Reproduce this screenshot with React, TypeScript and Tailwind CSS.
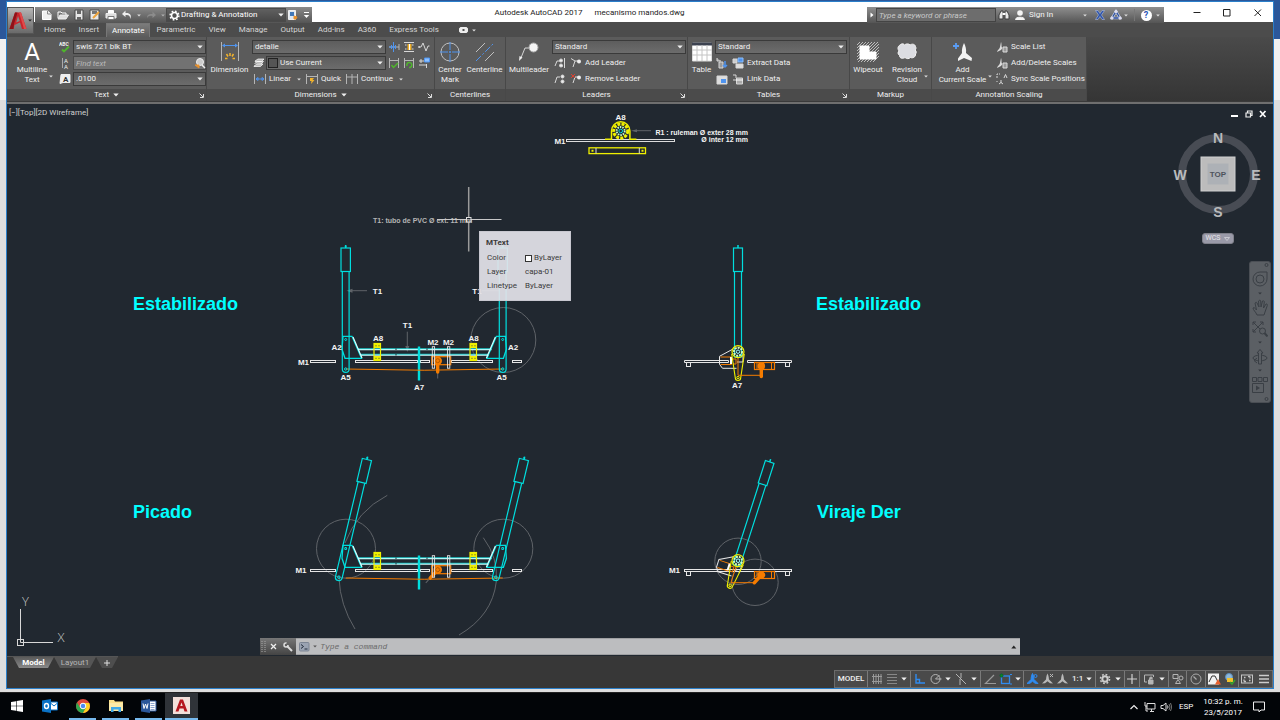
import React from "react";

type Kids = { children?: React.ReactNode };

function Ic({ w = 12, h = 12, className = "", children }: Kids & { w?: number; h?: number; className?: string }) {
  return (
    <svg width={w} height={h} viewBox={`0 0 ${w} ${h}`} fill="none" stroke="#d8d8d8" strokeWidth="1" className={`shrink-0 ${className}`} aria-hidden="true">
      {children}
    </svg>
  );
}

function Down({ className = "", tone = "#f0f0f0" }: { className?: string; tone?: string }) {
  return (
    <svg width="6" height="4" viewBox="0 0 6 4" fill={tone} className={`shrink-0 ${className}`} aria-hidden="true">
      <path d="M0.3 0.5h5.4L3 3.6z" />
    </svg>
  );
}

function SmallDown({ className = "", tone = "#e0e0e0" }: { className?: string; tone?: string }) {
  return (
    <svg width="4" height="3" viewBox="0 0 4 3" fill={tone} className={`shrink-0 ${className}`} aria-hidden="true">
      <path d="M0.2 0.4h3.6L2 2.6z" />
    </svg>
  );
}

function Combo({ label, value, className = "", pad = "pl-[2px]" }: { label: string; value: string; className?: string; pad?: string }) {
  return (
    <div className={`relative flex h-[14px] items-center border border-[#3a3a3a] bg-linear-to-b from-[#5d5d5d] to-[#6c6c6c] ${className}`}>
      <select aria-label={label} className={`h-full w-full appearance-none bg-transparent text-[8px] leading-[12px] text-[#f0f0f0] outline-none ${pad}`}>
        <option>{value}</option>
      </select>
      <Down className="pointer-events-none absolute right-[2px]" />
    </div>
  );
}

function Panel({ title, className = "", more = false, corner = false, children }: Kids & { title: string; className?: string; more?: boolean; corner?: boolean }) {
  return (
    <section aria-label={title} className={`flex shrink-0 flex-col border-r border-[#484848] ${className}`}>
      <div className="flex h-[52px] bg-[#5b5b5b] pt-[2px]">{children}</div>
      <div className="relative flex h-[12px] items-center justify-center gap-[4px] bg-[#4b4b4b] text-[8px] leading-[12px] text-[#efefef]">
        <span>{title}</span>
        {more && <Down />}
        {corner && (
          <Ic w={5} h={5} className="absolute right-[2px] top-[4px]">
            <path d="M0.5 0.5L4 4M4.5 1v3.5H1" stroke="#ddd" />
          </Ic>
        )}
      </div>
    </section>
  );
}

function Big({ icon, lines, className = "", arrow = "" }: { icon: React.ReactNode; lines: string[]; className?: string; arrow?: string }) {
  return (
    <button type="button" className={`relative flex shrink-0 flex-col items-center text-[8px] leading-[10px] whitespace-nowrap text-[#f0f0f0] ${className}`}>
      <span className="flex h-[26px] items-center">{icon}</span>
      {lines.map((l) => (
        <span key={l}>{l}</span>
      ))}
      {arrow && <SmallDown className={`absolute bottom-[11px] ${arrow}`} />}
    </button>
  );
}

function Small({ icon, label, arrow = false }: { icon: React.ReactNode; label?: string; arrow?: boolean }) {
  return (
    <button type="button" aria-label={label ?? "Tool"} className="flex h-4 items-center gap-[3px] text-[8px] leading-[12px] whitespace-nowrap text-[#f0f0f0]">
      {icon}
      {label && <span>{label}</span>}
      {arrow && <SmallDown className="ml-[3px]" />}
    </button>
  );
}

function IconBtn({ label, children, className = "" }: Kids & { label: string; className?: string }) {
  return (
    <button type="button" aria-label={label} className={`flex shrink-0 items-center justify-center ${className}`}>
      {children}
    </button>
  );
}

/* ---------- title bar ---------- */

function QuickAccess() {
  return (
    <div className="flex h-4 items-center self-end bg-linear-to-b from-[#8b8b8b] to-[#555] pl-[4px]">
      <IconBtn label="New" className="w-4">
        <Ic><path d="M1.500 2h5l3.500 3v5.500h-8.500z" fill="#eee" stroke="#fff" /><path d="M6.500 2v3h3.500" stroke="#888" /></Ic>
      </IconBtn>
      <IconBtn label="Open" className="w-4">
        <Ic><path d="M1 9V3h3l1 1h4v2" stroke="#fff" /><path d="M3 6h8.500L9 10H1z" fill="#ddd" stroke="#eee" /></Ic>
      </IconBtn>
      <IconBtn label="Save" className="w-4">
        <Ic><path d="M2 1h8v10H2z" fill="#e8e8e8" stroke="#4a4a4a" /><path d="M4 1h4v4H4zM4 8h4v3H4z" fill="#666" stroke="none" /></Ic>
      </IconBtn>
      <IconBtn label="Save As" className="w-4">
        <Ic><path d="M1 1h9v10H1z" fill="#e8e8e8" stroke="#4a4a4a" /><path d="M3 2h5v3H3z" fill="#777" stroke="none" /><path d="M4 9l6-6" stroke="#eda33b" strokeWidth="2" /></Ic>
      </IconBtn>
      <IconBtn label="Plot" className="w-4">
        <Ic><path d="M3.500 4V1.500h5V4" fill="#fff" stroke="#fff" /><path d="M1 4.500h10V9H1z" fill="#ddd" stroke="#eee" /><path d="M3 7.500h6v3H3z" fill="#fff" stroke="#777" /></Ic>
      </IconBtn>
      <IconBtn label="Undo" className="w-4">
        <Ic><path d="M4.500 1.500L1 5l3.500 3V6c3-.5 5 .5 4.500 4 2.500-4-.5-6.500-4.500-6z" fill="#eee" stroke="none" /></Ic>
      </IconBtn>
      <IconBtn label="Undo list" className="w-[8px]"><SmallDown /></IconBtn>
      <IconBtn label="Redo" className="w-4">
        <Ic><path d="M7.500 2.500L11 6 7.500 9V7C4.500 6.500 3 7 2.500 9 1.500 6 4 4.800 7.500 5z" fill="#8c8c8c" stroke="none" /></Ic>
      </IconBtn>
      <IconBtn label="Redo list" className="w-[7px]"><SmallDown tone="#b0b0b0" /></IconBtn>
      <div className="relative flex h-[14px] w-[120px] items-center border border-[#4a4a4a] bg-linear-to-b from-[#606060] to-[#484848]">
        <Ic w={11} h={11} className="absolute left-[2px]">
          <circle cx="5.500" cy="5.500" r="3" stroke="#fff" strokeWidth="1.600" />
          <circle cx="5.500" cy="5.500" r="4.400" stroke="#fff" strokeWidth="1.500" strokeDasharray="1.700 1.750" />
        </Ic>
        <select aria-label="Workspace" className="w-full appearance-none bg-transparent pl-[14px] text-[8px] leading-[12px] text-white outline-none">
          <option>Drafting &amp; Annotation</option>
        </select>
        <Down className="pointer-events-none absolute right-[1px]" />
      </div>
      <IconBtn label="Open from cloud" className="w-[14px]">
        <Ic><path d="M1.500 1.500h7v9h-7z" fill="#dfe8f2" stroke="#eee" /><path d="M3 3h4v4H3z" fill="#3f77b8" stroke="none" /><path d="M7 7l3 1-1 2-2 0z" fill="#e8912d" stroke="#e8912d" /></Ic>
      </IconBtn>
      <IconBtn label="Customize" className="w-[12px]">
        <Ic w={7} h={8}><path d="M1 1.500h5" stroke="#fff" /><path d="M0.800 4h5.400L3.500 7z" fill="#fff" stroke="none" /></Ic>
      </IconBtn>
    </div>
  );
}

function InfoCenter() {
  return (
    <div className="flex h-4 items-center self-end bg-linear-to-b from-[#8f8f8f] to-[#555]">
      <IconBtn label="Collapse search" className="h-4 w-[9px]">
        <Ic w={4} h={6}><path d="M0.500 0.500v5L3.500 3z" fill="#fff" stroke="none" /></Ic>
      </IconBtn>
      <input aria-label="Search" placeholder="Type a keyword or phrase" className="h-[14px] w-[120px] border border-[#444] bg-[#6d6d6d] pl-[2px] text-[8px] italic leading-[12px] text-white outline-none placeholder:text-[#c9c9c9]" />
      <IconBtn label="Find" className="w-4">
        <Ic><path d="M1 10V6l2-4h2v8zM11 10V6L9 2H7v8z" fill="#e8e8e8" stroke="#3d3d3d" /><path d="M4.500 5h3" stroke="#fff" strokeWidth="2" /></Ic>
      </IconBtn>
      <button type="button" className="flex items-center gap-[3px] pl-[2px] text-[8px] leading-[12px] text-[#f4f4f4]">
        <Ic><circle cx="6" cy="4" r="2.800" fill="#f4f4f4" stroke="none" /><path d="M1.500 10.500c0-3 9-3 9 0z" fill="#f4f4f4" stroke="#f4f4f4" /></Ic>
        <span className="w-[26px] text-left">Sign In</span>
      </button>
      <SmallDown className="ml-[28px]" />
      <IconBtn label="Exchange" className="ml-[5px] w-4">
        <Ic><path d="M1.500 1.500h2.500l2 3 2-3h2.500L7.500 6l3 4.500H8l-2-3-2 3H1.500l3-4.500z" fill="#2f55ac" stroke="#c3cfe8" strokeWidth="0.500" /></Ic>
      </IconBtn>
      <IconBtn label="Autodesk 360" className="w-4">
        <Ic><path d="M2 9L6 2.500 10 9z" stroke="#c3cfe8" strokeWidth="2.500" /><path d="M2 9L6 2.500 10 9z" stroke="#2f4f9e" strokeWidth="1.300" /><circle cx="6" cy="2.500" r="1.200" fill="#dde" stroke="#dde" /><circle cx="2" cy="9" r="1.200" fill="#dde" stroke="#dde" /><circle cx="10" cy="9" r="1.200" fill="#dde" stroke="#dde" /></Ic>
      </IconBtn>
      <SmallDown />
      <span className="ml-[6px] h-[12px] w-px bg-[#777]" />
      <IconBtn label="Help" className="ml-[3px] w-4">
        <span className="flex h-[11px] w-[11px] items-center justify-center rounded-full bg-white text-[9px] font-bold leading-none text-[#2a55b5]">?</span>
      </IconBtn>
      <SmallDown className="mr-[4px] ml-[2px]" />
    </div>
  );
}

const TABS = ["Home", "Insert", "Annotate", "Parametric", "View", "Manage", "Output", "Add-ins", "A360", "Express Tools"];

function Header() {
  return (
    <header className="flex bg-[linear-gradient(#fff_20px,#4c4c4c_20px)]">
      <button type="button" aria-label="Application menu" className="mt-[5px] flex h-[27px] w-[27px] shrink-0 items-center border border-[#555] bg-linear-to-b from-[#b5b5b5] to-[#6a6a6a]">
        <svg width="18" height="20" viewBox="0 0 18 20" className="ml-px" aria-hidden="true">
          <path d="M0.500 18L6 1.500h6L17.500 18h-4.500l-2-6.500L5.500 14 4.500 18z" fill="#c8242b" />
          <path d="M6 1.500h2.500L5 13l-.500 5h-4z" fill="#8e1219" />
          <path d="M9 5l1.800 5-3.600 1.500z" fill="#8a8a8a" />
          <path d="M12 1.500L17.500 18H15L10 1.500z" fill="#e04b4b" />
        </svg>
        <SmallDown className="ml-px" tone="#222" />
      </button>
      <div className="flex min-w-0 flex-1 flex-col">
        <div className="flex h-[21px] items-stretch pl-px">
          <QuickAccess />
          <h1 className="flex-1 self-center text-center text-[8px] leading-[12px] whitespace-pre text-[#222]">{"Autodesk AutoCAD 2017      mecanismo mandos.dwg"}</h1>
          <InfoCenter />
          <div className="flex w-[109px] items-center justify-around pl-[18px]">
            <IconBtn label="Minimize" className="h-[16px] w-[28px]"><Ic w={8} h={8}><path d="M0.500 3.500h7" stroke="#222" /></Ic></IconBtn>
            <IconBtn label="Maximize" className="h-[16px] w-[28px]"><Ic w={8} h={8}><path d="M0.500 0.500h6.500v6.500H0.500z" stroke="#222" /></Ic></IconBtn>
            <IconBtn label="Close" className="h-[16px] w-[28px]"><Ic w={8} h={8}><path d="M0.500 0.500l6.500 6.500M7 0.500L0.500 7" stroke="#222" /></Ic></IconBtn>
          </div>
        </div>
        <nav aria-label="Ribbon tabs" className="flex h-[14px] items-stretch pl-[4px] text-[8px] leading-[12px] text-[#d5d5d5]">
          {TABS.map((t) => (
            <button key={t} type="button" className={t === "Annotate" ? "border-x border-t border-[#777] bg-linear-to-b from-[#7c7c7c] to-[#5b5b5b] px-[5px] text-white" : "pr-[7px] pl-[6px]"}>
              {t}
            </button>
          ))}
          <button type="button" aria-label="Ribbon display" className="ml-[13px] flex items-center gap-[4px]">
            <Ic w={9} h={6}><rect x="0.500" y="0.500" width="8" height="5" rx="1.500" fill="#eee" stroke="#eee" /><path d="M3.500 2h2v2h-2z" fill="#555" stroke="none" /></Ic>
            <SmallDown />
          </button>
        </nav>
      </div>
    </header>
  );
}

/* ---------- ribbon ---------- */

const scaleIcon = (
  <Ic><path d="M5 1c1 2 0 5 1.500 6L5 9 1 11c0-2 3-3 3-5z" fill="#ddd" stroke="none" /><path d="M7 6h4v5H7z" fill="#999" stroke="#ddd" /></Ic>
);

function Ribbon() {
  return (
    <div className="flex bg-linear-to-b from-[#4a4a4a] to-[#353535]">
      <Panel title="Text" more corner className="w-[200px]">
        <Big className="w-[50px]" arrow="right-[4px]" lines={["Multiline", "Text"]} icon={<span className="text-[24px] leading-none text-white">A</span>} />
        <div className="flex w-[16px] flex-col items-center">
          <IconBtn label="Spell check" className="h-4"><Ic><text x="0" y="5" fontSize="5" fontWeight="bold" fill="#eee" stroke="none">ABC</text><path d="M3 8.500l2 2 5-5" stroke="#4fb52c" strokeWidth="1.800" /></Ic></IconBtn>
          <IconBtn label="Text align" className="h-4"><Ic><path d="M3.500 1v10" stroke="#aaa" /><text x="5" y="6" fontSize="6" fill="#eee" stroke="none">A</text><text x="5" y="11.500" fontSize="6" fill="#eee" stroke="none">A</text></Ic></IconBtn>
          <IconBtn label="Text height" className="h-4"><Ic><path d="M2 1.500h9v8H4l-3 1z" fill="#eee" stroke="#eee" /><text x="4" y="9" fontSize="8" fontWeight="bold" fill="#333" stroke="none">A</text></Ic></IconBtn>
        </div>
        <div className="flex flex-1 flex-col gap-[2px] pt-px">
          <Combo label="Text style" value="swis 721 blk BT" />
          <div className="relative flex h-[14px] items-center">
            <input aria-label="Find text" placeholder="Find text" className="h-full w-full border border-[#4a4a4a] bg-[#727272] pl-[2px] text-[8px] italic text-white outline-none placeholder:text-[#b9b9b9]" />
            <Ic className="absolute right-0"><circle cx="6" cy="5" r="3.500" fill="#ccc" stroke="#eee" /><path d="M8 8l3 3" stroke="#eee" strokeWidth="1.500" /><path d="M1 8h4v3z" fill="#e8912d" stroke="#e8912d" /></Ic>
          </div>
          <Combo label="Text height value" value=".0100" />
        </div>
      </Panel>

      <Panel title="Dimensions" more corner className="w-[228px]">
        <Big
          className="w-[45px]"
          lines={["Dimension"]}
          icon={
            <Ic w={20} h={20}>
              <path d="M1.500 0v19M18.500 0v19" stroke="#b5b5b5" /><path d="M3 3.500h14" stroke="#4f94ef" /><path d="M2 3.500l3-2v4zM18 3.500l-3-2v4z" fill="#4f94ef" stroke="none" />
              <path d="M10 11v3M6.500 12l1.500 2.500M13.500 12L12 14.500M5 16.500h2.500M12.500 16.500H15" stroke="#f2b32c" strokeWidth="1.500" />
            </Ic>
          }
        />
        <div className="flex flex-1 flex-col pr-[2px]">
          <div className="flex items-start">
            <div className="flex w-[134px] flex-col gap-[2px] pt-px">
              <Combo label="Dimension style" value="detalle" />
              <div className="flex items-center">
                <IconBtn label="Dimension layer" className="w-[14px]">
                  <Ic w={12} h={12}><path d="M1 9l3-2h6L7.500 9.500H1zM1.500 6.500l3-2h6L8 7M2 4l3-2h6L8.500 4.500H2z" fill="#bbb" stroke="#fff" strokeWidth="0.700" /></Ic>
                </IconBtn>
                <div className="relative flex-1">
                  <Combo label="Layer override" value="Use Current" pad="pl-[13px]" />
                  <span className="pointer-events-none absolute top-[2px] left-[2px] h-[10px] w-[10px] border border-[#222] bg-[#555]" />
                </div>
              </div>
            </div>
            <div className="grid flex-1 grid-cols-3 justify-items-center">
              <IconBtn label="Break" className="h-4"><Ic><path d="M1 6h10M11 3v6" stroke="#b5b5b5" /><path d="M5.500 1v10M1 6h6M3.500 4v4M7.500 4v4" stroke="#4f94ef" /></Ic></IconBtn>
              <IconBtn label="Adjust space" className="h-4"><Ic><path d="M1 1.500h10M1 10.500h10M2 4h1.500M9 4h1.500M2 8h1.500M9 8h1.500" /><path d="M4.500 3h4v6h-4z" fill="#f2b32c" stroke="none" /><path d="M6.500 3v6" stroke="#fff" /></Ic></IconBtn>
              <IconBtn label="Jog line" className="h-4"><Ic><path d="M1 6h2l2-4 3 8 2-5 1.500 0" /><path d="M1 5v2" stroke="#fff" /></Ic></IconBtn>
              <IconBtn label="Inspect" className="h-4"><Ic><path d="M1.500 1v10M10.500 1v10M2 3.500h8" stroke="#b5b5b5" /><path d="M3.500 8l2 2.500L10 6" stroke="#4fb52c" strokeWidth="1.500" /></Ic></IconBtn>
              <IconBtn label="Update" className="h-4"><Ic><path d="M1.500 1v10M10.500 1v10M2 3.500h8" stroke="#b5b5b5" /><path d="M4 9a2.500 2.500 0 1 1 2 1.500" stroke="#4fb52c" strokeWidth="1.500" /></Ic></IconBtn>
              <IconBtn label="Reassociate" className="h-4"><Ic><path d="M1 4h6M1 8h8M3 2v4M8.500 7v4" /><path d="M6.500 1h5v4h-5z" fill="#8cc0ff" stroke="#4f94ef" /></Ic></IconBtn>
            </div>
          </div>
          <div className="flex h-4 items-center gap-[5px] pl-[2px]">
            <Small label="Linear" arrow icon={<Ic><path d="M0.500 1v10M11.500 1v10" stroke="#b5b5b5" /><path d="M2 6h8M2 6l2-1.500v3zM10 6L8 4.500v3z" stroke="#4f94ef" /></Ic>} />
            <Small label="Quick" icon={<Ic><path d="M0.500 1v10M11.500 1v10M1 3.500h10" stroke="#b5b5b5" /><path d="M4 5h4L6.500 7h2L5 11l.500-3H4z" fill="#f2b32c" stroke="none" /></Ic>} />
            <Small label="Continue" arrow icon={<Ic><path d="M0.500 1v10M6 1v10M11.500 1v10M1 4h10" stroke="#b5b5b5" /></Ic>} />
          </div>
        </div>
      </Panel>

      <Panel title="Centerlines" className="w-[71px]">
        <Big
          className="w-[30px]"
          lines={["Center", "Mark"]}
          icon={<Ic w={20} h={20}><circle cx="10" cy="10" r="9" stroke="#c0c0c0" /><path d="M0 10h8M12 10h8M10 0v8M10 12v8M9 10h2M10 9v2" stroke="#4f94ef" /></Ic>}
        />
        <Big
          className="w-[39px]"
          lines={["Centerline"]}
          icon={<Ic w={20} h={20}><path d="M1 10L10 1M10 19l9-9" stroke="#c0c0c0" /><path d="M1 19L19 1" stroke="#4f94ef" strokeDasharray="7 2 2 2" /></Ic>}
        />
      </Panel>

      <Panel title="Leaders" corner className="w-[182px]">
        <Big
          className="w-[46px]"
          lines={["Multileader"]}
          icon={<Ic w={20} h={20}><path d="M1.500 17L6 6h5" stroke="#d5d5d5" /><path d="M0 19l.500-5 3 1.500z" fill="#eee" stroke="none" /><circle cx="14.500" cy="5.500" r="4.500" fill="#f4f4f4" stroke="#aaa" /></Ic>}
        />
        <div className="flex flex-1 flex-col gap-[2px] pt-px pr-px">
          <Combo label="Leader style" value="Standard" />
          <div className="flex h-[14px] items-center gap-[4px] pl-[2px]">
            <Small icon={<Ic><path d="M1 9l2-5h3M6 9h3M10.500 1v10" /><circle cx="7" cy="3.500" r="1.500" fill="#eee" /><circle cx="7" cy="8.500" r="1.500" fill="#eee" /></Ic>} />
            <Small label="Add Leader" icon={<Ic><path d="M3 10l2-6h3M1 1.500l4 2.500" /><circle cx="9" cy="4.500" r="2" fill="#eee" stroke="none" /></Ic>} />
          </div>
          <div className="flex h-[14px] items-center gap-[4px] pl-[2px]">
            <Small icon={<Ic><path d="M1 10l2-6h3" /><circle cx="8.500" cy="3.500" r="1.500" fill="#eee" /><circle cx="8.500" cy="8.500" r="1.500" fill="#eee" /></Ic>} />
            <Small label="Remove Leader" icon={<Ic><path d="M3 10l2-6h3" /><path d="M1 1l4 4M5 1L1 5" stroke="#e04030" /><circle cx="9" cy="4.500" r="2" fill="#eee" stroke="none" /></Ic>} />
          </div>
        </div>
      </Panel>

      <Panel title="Tables" corner className="w-[162px]">
        <Big
          className="w-[27px]"
          lines={["Table"]}
          icon={<Ic w={20} h={20}><path d="M0.500 1h19v18H0.500z" fill="#fff" stroke="#ddd" /><path d="M0 0.500h20v3H0z" fill="#3c4250" stroke="none" /><path d="M0 8h20M0 13h20M5 3v16M10 3v16M15 3v16" stroke="#c4c4c4" /></Ic>}
        />
        <div className="flex flex-1 flex-col gap-[2px] pt-px pr-[2px]">
          <Combo label="Table style" value="Standard" />
          <div className="flex h-[14px] items-center gap-[4px] pl-px">
            <Small icon={<Ic><path d="M1 1v3h4M3 5h4v6H3z" fill="#999" /><path d="M9 4v6M7 8l2 2 2-2" stroke="#4f94ef" strokeWidth="1.500" /></Ic>} />
            <Small label="Extract Data" icon={<Ic><path d="M1 2h4v4H1z" fill="#ccc" /><path d="M6 1h5v4H6z" fill="#4f94ef" stroke="#8cc0ff" /><path d="M4 7h7v4H4z" fill="#ddd" /></Ic>} />
          </div>
          <div className="flex h-[14px] items-center gap-[4px] pl-px">
            <Small icon={<Ic><path d="M1 3h10v8H1z" fill="#ddd" /><path d="M5 6h5v4H5z" fill="#4f94ef" stroke="none" /></Ic>} />
            <Small label="Link Data" icon={<Ic><path d="M1 2h3v3M1 7h3" /><path d="M4.500 5h6v6h-6z" fill="#aaa" /><path d="M4 7h7" stroke="#fff" /></Ic>} />
          </div>
        </div>
      </Panel>

      <Panel title="Markup" className="w-[82px]">
        <Big
          className="w-[36px]"
          lines={["Wipeout"]}
          icon={<Ic w={22} h={20}><path d="M0 6L6 0M0 12L12 0M0 18L18 0M4 20L22 2M10 20L22 8M16 20l6-6M0 3l3-3M0 9L9 0M0 15L15 0M1 20L21 0M7 20L22 5M13 20l9-9" stroke="#bdbdbd" /><path d="M3 4h9v6h7v7H3z" fill="#fff" stroke="#fff" /></Ic>}
        />
        <Big
          className="w-[42px]"
          arrow="right-0"
          lines={["Revision", "Cloud"]}
          icon={<Ic w={20} h={18}><path d="M3 2c2-2 4-1 4.500 0C9 .5 12 .5 13 2c2-1.500 5-1 5.500 1.500.8 1.500.5 2.500-.3 3.500 1.500 1.500 1.200 3 .3 4 .5 3-3 4.500-5 3.500-1.500 1.500-4 1.500-5.500 0-2 1.500-5.500 1-5.500-2C.5 11 .8 9 2 8 .5 6 .5 3.500 3 2z" fill="#dcdde2" stroke="#f5f5f5" /></Ic>}
        />
      </Panel>

      <Panel title="Annotation Scaling" className="w-[155px]">
        <Big
          className="w-[61px]"
          arrow="right-px"
          lines={["Add", "Current Scale"]}
          icon={<Ic w={20} h={20}><path d="M11 1c1.500 3 2.500 6 2 10l6 5-.5 3-7.500-3-6 3v-2.500l4-5.500C8.500 8 9.500 4 11 1z" fill="#f2f2f2" stroke="none" /><path d="M3 1v6M0 4h6" stroke="#5a9df5" strokeWidth="1.800" /></Ic>}
        />
        <div className="flex flex-1 flex-col pl-[3px]">
          <Small label="Scale List" icon={scaleIcon} />
          <Small label="Add/Delete Scales" icon={scaleIcon} />
          <Small label="Sync Scale Positions" icon={<Ic><path d="M1 5V1h3M1 8v1" strokeDasharray="2 1" /><path d="M8 5l1.500-3.500L11 5M5 7v3M3 11l2-1.500L7 11" /></Ic>} />
        </div>
      </Panel>
    </div>
  );
}

/* ---------- drawing ---------- */

const CY = "#00dede";
const OR = "#f57c00";
const YE = "#f0f000";
const GY = "#5f6368";

function Lever({ x }: { x: number }) {
  return (
    <g transform={`translate(${x} 0)`} stroke={CY} fill="none" strokeWidth="1.200">
      <path d="M0 245v3M-1 246.500h2" strokeWidth="1.500" />
      <rect x="-4.700" y="248" width="9.400" height="23.500" />
      <path d="M-3.400 271.500V369a3.400 3.400 0 0 0 6.800 0V271.500" />
      <circle cx="0" cy="369" r="1.200" strokeWidth="1" />
      <circle cx="0" cy="339.500" r="1" strokeWidth="1" />
    </g>
  );
}

function Bracket() {
  return (
    <g fill="none">
      <path d="M343 336.300h9l9.500 22H345l-3-9z" stroke={CY} strokeWidth="1.300" />
      <path d="M353 337l6 14 3 7" stroke="#d9ffff" strokeWidth="1.200" />
    </g>
  );
}

function Clamp({ x }: { x: number }) {
  return (
    <g>
      <rect x={x} y="343.500" width="6.500" height="17" fill="none" stroke={YE} strokeWidth="1.200" />
      <rect x={x} y="343.500" width="6.500" height="4.500" fill={YE} />
      <rect x={x} y="356" width="6.500" height="4.500" fill={YE} />
      <path d={`M${x + 1.5} 345.800h1m2 0h1M${x + 1.5} 358.300h1m2 0h1`} stroke="#444" strokeWidth="1" />
    </g>
  );
}

function FrontBase({ tilt }: { tilt: number }) {
  return (
    <g>
      <g fill="none" stroke="#e6e6e6" strokeWidth="1">
        <rect x="310.500" y="360.500" width="25" height="2" />
        <rect x="355.500" y="360.500" width="62" height="2" />
        <rect x="420.500" y="360.500" width="9" height="2" />
        <rect x="451.500" y="360.500" width="41" height="2" />
        <rect x="512.500" y="360.500" width="9" height="2" />
      </g>
      <g>
        <path d="M358 349.500H491.500M360 355H489" stroke="#cfffff" strokeWidth="1.400" />
        <path d="M358 348.700H491.500M360 354.200H489" stroke={CY} strokeWidth="0.700" />
        <path d="M396 348.500v1.500M427 348.500v1.500M396 354v1.500" stroke="#222930" strokeWidth="1" />
      </g>
      <Bracket />
      <g transform="translate(848.400 0) scale(-1 1)"><Bracket /></g>
      <Clamp x={374} />
      <Clamp x={470} />
      <path d="M419 346.500v34" stroke={CY} strokeWidth="2.400" />
      <path d="M345.700 369q78.500 2.500 157 0" fill="none" stroke={OR} strokeWidth="1" />
      <rect x="431.700" y="356.700" width="19" height="8" fill="none" stroke={OR} strokeWidth="1.200" />
      <g transform={`rotate(${tilt} 437.700 360.700)`}>
        <path d="M437.700 372v6.500" stroke={GY} strokeWidth="1" />
        <path d="M437.700 360v12" stroke={OR} strokeWidth="3.400" strokeLinecap="round" />
        <circle cx="437.700" cy="360.700" r="4.300" fill={OR} />
        <circle cx="437.700" cy="360.700" r="2" fill="none" stroke="#8a4500" strokeWidth="0.600" />
      </g>
      <rect x="432.300" y="346.700" width="2.300" height="21.500" fill="none" stroke="#e6e6e6" strokeWidth="0.900" />
      <rect x="447.500" y="346.700" width="2.300" height="21.500" fill="none" stroke="#e6e6e6" strokeWidth="0.900" />
    </g>
  );
}

function SideLever() {
  return (
    <g fill="none" stroke={CY} strokeWidth="1.200">
      <path d="M738 245v3" strokeWidth="1.500" />
      <rect x="733.500" y="248" width="9" height="23.500" />
      <path d="M734.500 271.500V357h7V271.500" />
    </g>
  );
}

function Housing() {
  return (
    <g fill="none">
      <path d="M736.500 368.300h-14l-3-4v-8l13-7M743 354v8h-6" stroke="#e6e6e6" />
      <path d="M720.500 357h11v7.500h-11M738 358v17M733 359h3v5h-3" stroke={OR} />
      <path d="M731 357v7" stroke="#fff" strokeWidth="2" />
      <path d="M731.700 354l3.600 23.800a2.700 2.700 0 0 0 5.400 0L744.300 354" stroke={YE} strokeWidth="1.100" />
      <circle cx="738" cy="351.700" r="6" stroke={YE} strokeWidth="1.200" />
      <circle cx="738" cy="351.700" r="4" stroke="#d8ffb8" strokeWidth="2" strokeDasharray="2 1" />
      <circle cx="738" cy="351.700" r="1.700" stroke="#9ff" strokeWidth="1" />
      <circle cx="738" cy="377.500" r="1.200" stroke={YE} />
    </g>
  );
}

function SideBase({ tilt, full }: { tilt: number; full: boolean }) {
  return (
    <g>
      <g fill="none" stroke="#e6e6e6">
        {full ? <rect x="684.500" y="360.500" width="107" height="2" /> : <path d="M684.500 360.500h44v2h-44zM747.500 360.500h44v2h-44z" />}
        <rect x="686.500" y="362.500" width="4" height="4" />
        <rect x="785.500" y="362.500" width="4" height="4" />
      </g>
      <rect x="754.500" y="362.500" width="20" height="7" fill="none" stroke={OR} strokeWidth="1.200" />
      <path d="M757 362.500v7M771.500 362.500v7" stroke={OR} />
      <g transform={`rotate(${tilt} 761.300 366)`}>
        <path d="M761.300 366v10.500" stroke={OR} strokeWidth="3.400" strokeLinecap="round" />
        <circle cx="761.300" cy="366" r="3.800" fill={OR} />
      </g>
    </g>
  );
}

function Label({ x, y, t, anchor = "middle" }: { x: number; y: number; t: string; anchor?: "start" | "middle" | "end" }) {
  return <text x={x} y={y} textAnchor={anchor}>{t}</text>;
}

function Drawing() {
  return (
    <svg viewBox="7 104 1266 552" preserveAspectRatio="xMinYMin meet" className="block h-full w-full font-['Liberation_Sans',sans-serif]" role="img" aria-label="mecanismo mandos">
      {/* bearing detail */}
      <rect x="566.500" y="139.500" width="108" height="2" fill="none" stroke="#dcdcdc" />
      <g fill="none" stroke={YE}>
        <path d="M605 139.300h6.500V131a9.200 9.200 0 0 1 18.400 0v8.300h6.500" strokeWidth="1.500" />
        <circle cx="620.700" cy="131" r="7" strokeWidth="3" strokeDasharray="3 1.200" />
        <circle cx="620.700" cy="131" r="4" stroke="#c8ffc8" strokeWidth="1.800" strokeDasharray="1.500 1" />
        <circle cx="620.700" cy="131" r="1.800" stroke={CY} />
        <rect x="589" y="147.800" width="56.500" height="5.800" strokeWidth="1.300" />
        <path d="M596 148v5.500M639.300 148v5.500" stroke="#ddd" />
        <path d="M591.500 150.700h2M641.500 150.700h2" strokeWidth="2" />
      </g>
      <g stroke={GY} fill={GY}>
        <path d="M634 130.700h17" /><path d="M631 130.700l6-1.500v3z" stroke="none" />
        <path d="M350 290.700h17" /><path d="M346.500 290.700l6-2v4z" stroke="none" />
        <path d="M407.300 331.700v17" /><path d="M407.300 352l-2-6h4z" stroke="none" />
        <path d="M482 290.700h17" />
      </g>

      {/* front view, stable */}
      <circle cx="503.300" cy="340" r="32.500" fill="none" stroke={GY} />
      <FrontBase tilt={0} />
      <Lever x={345.7} />
      <Lever x={502.7} />

      {/* side view, stable */}
      <SideBase tilt={0} full={false} />
      <SideLever />
      <Housing />
      <path d="M738 375.300h23" stroke={OR} />

      {/* front view, dive */}
      <g transform="translate(0 209)">
        <g fill="none" stroke={GY}>
          <circle cx="346" cy="339.700" r="29.500" />
          <circle cx="503.300" cy="339.700" r="29.500" />
          <path d="M387.300 286.300Q357 302 345 334M339 369q1 27 16 51M483.300 328.700q15 20 13 44-4 34-37.300 53.300" />
        </g>
        <FrontBase tilt={42} />
        <g transform="rotate(13.400 345.700 339.500)"><Lever x={345.7} /></g>
        <g transform="rotate(13.400 502.700 339.500)"><Lever x={502.7} /></g>
      </g>

      {/* side view, right turn */}
      <g transform="translate(0 209)">
        <circle cx="738" cy="352.300" r="23.200" fill="none" stroke={GY} />
        <circle cx="755" cy="373.300" r="23.200" fill="none" stroke={GY} />
        <SideBase tilt={42} full />
        <g transform="rotate(17.800 738 351.700)">
          <SideLever />
          <Housing />
        </g>
        <path d="M731 373.700h23" stroke={OR} />
      </g>

      {/* annotations */}
      <g fill="#f4f4f4" fontSize="8" fontWeight="bold">
        <Label x={620.5} y={120} t="A8" /><Label x={560} y={144} t="M1" />
        <g fontSize="7">
          <Label x={748} y={135} t="R1 : ruleman Ø exter 28 mm" anchor="end" />
          <Label x={748} y={142} t="Ø inter 12 mm" anchor="end" />
          <text x="373" y="223" fill="#b5b5b5">T1: tubo de PVC Ø ext. 11 mm</text>
        </g>
        <Label x={377.5} y={294} t="T1" /><Label x={477} y={294} t="T1" /><Label x={407.5} y={328} t="T1" />
        <Label x={378} y={341} t="A8" /><Label x={473.5} y={341} t="A8" />
        <Label x={433} y={345} t="M2" /><Label x={448.5} y={345} t="M2" />
        <Label x={336.5} y={350} t="A2" /><Label x={513} y={350} t="A2" />
        <Label x={303.5} y={365} t="M1" /><Label x={345.7} y={380} t="A5" /><Label x={501.5} y={380} t="A5" />
        <Label x={419} y={390} t="A7" /><Label x={737} y={388} t="A7" />
        <Label x={301} y={573} t="M1" /><Label x={674.5} y={573} t="M1" />
      </g>
      <g fill="#00ffff" fontSize="18" fontWeight="bold">
        <text x="133" y="310">Estabilizado</text><text x="133" y="518">Picado</text>
        <text x="816" y="310">Estabilizado</text><text x="817" y="518">Viraje Der</text>
      </g>

      {/* crosshair */}
      <path d="M468.700 187v30M468.700 222v29.500" stroke="#9a9a9a" strokeWidth="1.500" />
      <path d="M437 219.500h29M471 219.500h30.500" stroke="#c8c8c8" strokeWidth="1" />
      <rect x="466.500" y="217.500" width="4.500" height="4.500" fill="none" stroke="#ddd" />

      {/* coordinate axes */}
      <g fill="none" stroke="#d8d8d8"><path d="M20.500 609v33.500H53" /><rect x="17.500" y="639.500" width="6" height="6" /></g>
      <g fill="#c8c8c8" fontSize="13" textAnchor="middle" className="font-['Open_Sans',sans-serif] font-light"><text x="25.500" y="606">Y</text><text x="61" y="641.500">X</text></g>
    </svg>
  );
}

function Tip() {
  return (
    <div role="tooltip" className="absolute top-[127px] left-[472px] w-[92px] border border-[#c8c8d0] bg-[#e3e3ea]/93 px-[6px] pt-[4px] pb-[7px] text-[8px] text-[#3b3b3b]">
      <p className="font-bold leading-[13px]">MText</p>
      <dl className="mt-[2px] grid grid-cols-[38px_1fr] pl-px leading-[14px]">
        <dt>Color</dt>
        <dd className="flex items-center gap-[2px]"><span className="h-[7px] w-[7px] border border-[#333] bg-white" />ByLayer</dd>
        <dt>Layer</dt><dd>capa-01</dd>
        <dt>Linetype</dt><dd>ByLayer</dd>
      </dl>
    </div>
  );
}

function ViewCube() {
  return (
    <div className="absolute top-[26px] right-[9px] flex w-[92px] flex-col items-center">
      <svg width="92" height="92" viewBox="0 0 92 92" aria-label="View cube" role="img" className="font-['Liberation_Sans',sans-serif]">
        <circle cx="46" cy="44" r="36" fill="none" stroke="#484c54" strokeWidth="8" />
        <rect x="29" y="27" width="34" height="34" fill="#bcbcbc" stroke="#cfcfcf" />
        <rect x="35.500" y="33.500" width="21" height="21" fill="#adb1b6" />
        <g fill="#b9bbbd" fontSize="14" fontWeight="bold" textAnchor="middle">
          <text x="46" y="13">N</text><text x="46" y="87">S</text><text x="8" y="50">W</text><text x="84" y="50">E</text>
          <text x="46" y="47" fontSize="8" fill="#4d535c">TOP</text>
        </g>
      </svg>
      <button type="button" className="mt-[11px] flex h-[11px] w-[32px] items-center justify-center gap-[4px] rounded-[3px] border border-[#7f808a] bg-[#9a9aa8] text-[7px] leading-none text-[#e6e6ea]">
        WCS<Ic w={6} h={4}><path d="M0.500 0.500h5L3 3.500z" stroke="#c8c8d0" /></Ic>
      </button>
    </div>
  );
}

function NavBar() {
  const s = "#3a3f45";
  const f = "#5b5f64";
  return (
    <nav aria-label="Navigation" className="absolute top-[157px] right-[2px] flex h-[142px] w-[22px] flex-col items-center justify-between rounded-[3px] border border-[#4a4e54] bg-[#5b5f64] py-px">
      <Ic w={18} h={4}><circle cx="15.500" cy="2" r="1.500" stroke={s} /></Ic>
      <IconBtn label="Steering wheel"><Ic w={16} h={16}><path d="M15 1v7a7 7 0 1 1-7-7z" stroke={s} /><circle cx="8" cy="8" r="4" stroke={s} /></Ic></IconBtn>
      <SmallDown tone="#33373c" />
      <IconBtn label="Pan"><Ic w={16} h={17}><path d="M5 16c-1-3-4-5-4-7 1-1 2 0 3.500 2L3 4c1-1 2-1 2.500 1L7 8l-.500-6c1-1 2-1 2.200 0L9 8l1.500-6c1-.5 2 0 1.800 1L11.500 9 14 5c1-.3 1.600.5 1.300 1.500L13 13l-1 3z" stroke={s} /></Ic></IconBtn>
      <IconBtn label="Zoom"><Ic w={16} h={16}><path d="M1 1l10 10M11 1L1 11M1 4V1h3M8 1h3v3M1 8v3h3" stroke={s} /><circle cx="10.500" cy="10" r="3" stroke={s} fill={f} /><path d="M12.500 12l3 3.500" stroke={s} strokeWidth="2" /></Ic></IconBtn>
      <SmallDown tone="#33373c" />
      <IconBtn label="Orbit"><Ic w={16} h={16}><ellipse cx="8" cy="9" rx="7" ry="2.800" stroke={s} /><path d="M6.500 15V4H5l3-3.500L11 4H9.500v11z" stroke={s} fill={f} /><path d="M5 9l-3 2.500L5 14" stroke={s} /></Ic></IconBtn>
      <SmallDown tone="#33373c" />
      <IconBtn label="Show motion"><Ic w={16} h={16}><path d="M0.500 0.500h4v4h-4zM6 0.500h4v4H6zM11.500 0.500h4v4h-4zM0.500 6.500h11v9h-11z" stroke={s} /><path d="M4 8.500v5l4-2.500z" fill={s} stroke="none" /></Ic></IconBtn>
      <Ic w={18} h={4}><circle cx="15.500" cy="2" r="1.500" stroke={s} /></Ic>
    </nav>
  );
}

function CommandLine() {
  return (
    <div className="absolute bottom-px left-1/5 flex h-[17px] w-3/5 items-stretch">
      <div className="flex w-[36px] items-center gap-[4px] bg-linear-to-b from-[#777] to-[#444] pl-px">
        <Ic w={5} h={12}><path d="M1 0v12M4 0v12" stroke="#aaa" strokeDasharray="1 1" /></Ic>
        <IconBtn label="Close command line"><Ic w={7} h={7}><path d="M1 1l5 5M6 1L1 6" stroke="#eee" strokeWidth="1.300" /></Ic></IconBtn>
        <IconBtn label="Customize command line" className="ml-[2px]"><Ic w={10} h={10}><path d="M4 4l5 5" stroke="#ddd" strokeWidth="2" /><circle cx="3" cy="3" r="2" stroke="#ddd" strokeWidth="1.500" strokeDasharray="9 3" /></Ic></IconBtn>
      </div>
      <div className="flex flex-1 items-center gap-[3px] border-y border-[#9fa0a2] bg-[#bcbdbf] px-[3px]">
        <Ic w={11} h={10}><rect x="0.500" y="0.500" width="9.500" height="8.500" rx="1" fill="#9aa3b2" stroke="#7c8594" /><path d="M2 2.500l2.500 2-2.500 2M5.500 7h3" stroke="#222c3c" /></Ic>
        <SmallDown tone="#555" />
        <input aria-label="Command" placeholder="Type a command" className="h-full min-w-0 flex-1 bg-transparent font-['Liberation_Mono',monospace] text-[8px] italic text-[#333] outline-none placeholder:text-[#6b6b6b]" />
        <Ic w={6} h={4}><path d="M0.300 3.500h5L2.800 0.500z" fill="#222" stroke="none" /></Ic>
      </div>
    </div>
  );
}

function Canvas() {
  return (
    <main className="relative min-h-0 flex-1 bg-[#212830]">
      <div className="absolute inset-0"><Drawing /></div>
      <div className="absolute top-[3px] left-[2px] text-[8px] leading-[12px] text-[#d0d0d0]">[−][Top][2D Wireframe]</div>
      <div className="absolute top-[6px] right-[6px] flex gap-[6px]">
        <IconBtn label="Minimize drawing"><Ic w={8} h={8}><path d="M0 6h7" stroke="#fff" strokeWidth="2" /></Ic></IconBtn>
        <IconBtn label="Restore drawing"><Ic w={8} h={8}><path d="M2.500 2.500v-1.500h4.500v4.500H5.500M1 3h4.500v4H1z" stroke="#eee" strokeWidth="1.200" /></Ic></IconBtn>
        <IconBtn label="Close drawing"><Ic w={8} h={8}><path d="M1 1l5.500 6M6.500 1L1 7" stroke="#fff" strokeWidth="1.700" /></Ic></IconBtn>
      </div>
      <ViewCube />
      <NavBar />
      <Tip />
      <CommandLine />
    </main>
  );
}

/* ---------- footer ---------- */

function Group({ children, className = "" }: Kids & { className?: string }) {
  return <div className={`flex h-full items-center justify-around border-r border-[#7a7a7a] px-px ${className}`}>{children}</div>;
}

const person = "M5.500 0.500c1.300 2 1.300 5 1.500 6l4 4-3-.3-2.500-2-2.500 2-3 .3 4-4c.2-1 .2-4 1.500-6z";

function StatusBar() {
  return (
    <div className="flex h-[18px] items-center self-end border border-[#6b6b6b] bg-[#4a4a4a] text-[8px] text-[#efefef]">
      <Group className="w-[33px]"><button type="button" className="font-medium">MODEL</button></Group>
      <Group className="w-[43px]">
        <Ic><path d="M2.500 1v10M5 1v10M7.500 1v10M10 1v10M1 3.500h10M1 8.500h10" stroke="#999" /></Ic>
        <Ic><path d="M1 1.500h10M1 4.500h10M1 7.500h10M1 10.500h10" stroke="#888" /></Ic>
        <Down />
      </Group>
      <Group className="w-[70px]">
        <Ic><path d="M2 1v9h9M2 6.500h3.500V10" stroke="#2f8bf0" strokeWidth="1.400" /></Ic>
        <Ic><circle cx="5.500" cy="6" r="4.500" stroke="#b5b5b5" /><path d="M5.500 6h6M5.500 6l4-4" stroke="#b5b5b5" /></Ic>
        <Down />
        <Ic><path d="M1 1l10 10M6 0v5M5 6v6" stroke="#b5b5b5" /></Ic>
        <Down />
      </Group>
      <Group className="w-[43px]">
        <Ic><path d="M10 2L1.500 10.500H12" stroke="#999" strokeWidth="1.200" /></Ic>
        <Ic w={13}><rect x="2.500" y="3" width="8" height="7.500" stroke="#2f8bf0" strokeWidth="1.300" /><circle cx="2.500" cy="2.500" r="1.500" fill="#0f8a1a" stroke="#063" /><path d="M11 1.500h2M11 11h2" stroke="#2f8bf0" /></Ic>
        <Down />
      </Group>
      <Group className="w-[72px]">
        <Ic><path d={person} fill="#2f8bf0" stroke="#2f8bf0" /><circle cx="8.500" cy="3" r="1.500" stroke="#2f8bf0" /></Ic>
        <Ic><path d={person} fill="#b8b8b8" stroke="none" /><path d="M8 1l3 3M11 1L8 4" stroke="#b8b8b8" /></Ic>
        <Ic><path d={person} fill="#b8b8b8" stroke="none" /></Ic>
        <button type="button" className="font-medium">1:1</button>
        <Down />
      </Group>
      <Group className="w-[29px]">
        <Ic><circle cx="6" cy="6" r="2.700" stroke="#ccc" strokeWidth="2" /><circle cx="6" cy="6" r="4.600" stroke="#ccc" strokeWidth="1.500" strokeDasharray="1.800 1.810" /></Ic>
        <Down />
      </Group>
      <Group className="w-[15px]"><Ic><path d="M6 1v10M1 6h10" stroke="#d0d0d0" strokeWidth="1.200" /></Ic></Group>
      <Group className="w-[29px]">
        <Ic><path d="M4 9H1.500V2h9v2" stroke="#b5b5b5" /><path d="M5.500 7h4.500v4H5.500zM6.500 7V5.500a1.500 1.500 0 0 1 3 0" fill="#b5b5b5" stroke="#b5b5b5" /></Ic>
        <Down />
      </Group>
      <Group className="w-[18px]"><Ic><path d="M1 1.500h5v4H1zM3.500 10.500l2.500-4 2.500 4z" stroke="#b5b5b5" /><circle cx="9" cy="5" r="2" stroke="#b5b5b5" /></Ic></Group>
      <Group className="w-[19px]"><Ic><circle cx="6" cy="6" r="5" stroke="#aaa" /><path d="M3.500 3.500l3 3" stroke="#aaa" strokeWidth="1.200" /></Ic></Group>
      <Group className="w-[33px]">
        <Ic w={13}><rect width="11" height="11" y="0.500" fill="#f2f2f2" stroke="none" /><path d="M1 9l3-6h3l3 6" stroke="#333" /><path d="M10 6l3 5.500H7z" fill="#e8602d" stroke="none" /></Ic>
        <Ic><circle cx="5" cy="4" r="3.500" fill="#8db7d9" stroke="#5d8fc0" /><path d="M3 5h6v4H3z" fill="#f2c12c" stroke="none" /><path d="M6 9l2 2 3-4" stroke="#35a52c" strokeWidth="1.500" /></Ic>
      </Group>
      <div className="flex w-[33px] items-center justify-around">
        <Ic><rect x="0.500" y="2" width="11" height="8" stroke="#c5c5c5" /><path d="M3 8.500V6.500M3 8.500h2M9 3.500v2M9 3.500H7M3 4.500h1.500M8 7.500h1.500" stroke="#c5c5c5" strokeWidth="1.300" /></Ic>
        <Ic><path d="M1 2.500h10M1 6h10M1 9.500h10" stroke="#ccc" strokeWidth="1.300" /></Ic>
      </div>
    </div>
  );
}

function Footer() {
  const clip = "[clip-path:polygon(0_0,100%_0,calc(100%_-_6px)_100%,6px_100%)]";
  return (
    <footer className="flex h-[32px] shrink-0 items-start justify-between bg-[#373737]">
      <div role="tablist" className="flex h-[12px] items-stretch border-t border-[#555] pl-[6px] text-[8px] leading-[11px]">
        <button role="tab" aria-selected="true" type="button" className={`w-[41px] bg-linear-to-b from-[#5a5a5a] to-[#8a8a8a] font-bold text-white ${clip}`}>Model</button>
        <button role="tab" aria-selected="false" type="button" className={`w-[42px] bg-[#555] text-[#b5b5b5] ${clip}`}>Layout1</button>
        <button type="button" aria-label="New layout" className={`flex w-[22px] items-center justify-center bg-[#4e4e4e] ${clip}`}><Ic w={6} h={6}><path d="M3 0v6M0 3h6" stroke="#ddd" /></Ic></button>
      </div>
      <StatusBar />
    </footer>
  );
}

function Task({ label, children, open = false, active = false }: Kids & { label: string; open?: boolean; active?: boolean }) {
  return (
    <button type="button" aria-label={label} className={`flex h-full w-[33px] flex-col items-center ${active ? "bg-[#2f3338]" : ""}`}>
      <span className="flex flex-1 items-center">{children}</span>
      <span className={`h-[2px] ${open ? "bg-[#76b9ed]" : ""} ${active ? "w-full" : "w-[27px]"}`} />
    </button>
  );
}

function Taskbar() {
  return (
    <footer className="flex h-[28px] shrink-0 items-stretch justify-between border-t border-[#222] bg-[#020508] text-[8px] text-white">
      <div className="flex">
        <Task label="Start"><Ic w={12} h={12}><path d="M0 2l5-.8v4.500H0zM5.600 1.100L12 0v5.700H5.600zM0 6.300h5v4.500L0 10zM5.600 6.300H12V12l-6.400-1z" fill="#fff" stroke="none" /></Ic></Task>
        <Task label="Outlook">
          <Ic w={16} h={14}><path d="M8 3h7.500v8H8z" fill="#fff" stroke="#0a72c6" /><path d="M8.500 4l3.500 3 3.500-3" stroke="#0a72c6" /><path d="M0 1.500L9 0v14l-9-1.500z" fill="#0a72c6" stroke="none" /><ellipse cx="4.500" cy="7" rx="2" ry="2.500" stroke="#fff" strokeWidth="1.400" /></Ic>
        </Task>
        <Task label="Chrome" open>
          <Ic w={14} h={14}><circle cx="7" cy="7" r="7" fill="#dd4b3e" stroke="none" /><path d="M1 3.500A7 7 0 0 0 7 14l3-5.500H4z" fill="#2da94f" stroke="none" /><path d="M7 14A7 7 0 0 0 13.200 4H7l3 4.500z" fill="#fdd023" stroke="none" /><circle cx="7" cy="7" r="2.800" fill="#4a8af4" stroke="#fff" /></Ic>
        </Task>
        <Task label="File Explorer" open>
          <Ic w={16} h={14}><path d="M1 1h5l1 1.500h8V12H1z" fill="#fbe08a" stroke="none" /><path d="M1 4h14v8H1z" fill="#fceaa8" stroke="none" /><path d="M3 13V8h10v5h-2.500v-2.500h-5V13z" fill="#3fa9e8" stroke="none" /></Ic>
        </Task>
        <Task label="Word" open>
          <Ic w={16} h={14}><path d="M8 2h7v10H8z" fill="#fff" stroke="#2b579a" /><path d="M9.500 4.500h4M9.500 6.500h4M9.500 8.500h4M9.500 10.500h4" stroke="#8da6cf" /><path d="M0 1.500L9 0v14l-9-1.500z" fill="#2b579a" stroke="none" /><path d="M2 4.500l1 5 1.500-4.500L6 9.500l1-5" stroke="#fff" /></Ic>
        </Task>
        <Task label="AutoCAD" open active>
          <Ic w={17} h={17}><rect width="17" height="17" fill="#f3dfd9" stroke="none" /><path d="M2.500 14.500L7 2.500h3l4.500 12h-3l-1-3H6.500l-1 3zM7.300 9h2.400L8.500 5.500z" fill="#b5161e" stroke="none" /></Ic>
        </Task>
      </div>
      <div className="flex items-center">
        <IconBtn label="Show hidden icons" className="w-4"><Ic w={8} h={8}><path d="M0.500 6L4 2.500 7.500 6" stroke="#eee" strokeWidth="1.200" /></Ic></IconBtn>
        <IconBtn label="Network" className="w-4"><Ic><path d="M3 2.500h8v5.500H3zM6 10.500h4M7.500 8v2M1 1v4h2M2 5v5h2" stroke="#ddd" /></Ic></IconBtn>
        <IconBtn label="Volume" className="w-4"><Ic><path d="M1 4.500h2L6 2v8L3 7.500H1zM7.500 4.500q1 1.500 0 3" stroke="#ddd" /><path d="M9 3q2 3 0 6M10.500 2q2.500 4 0 8" stroke="#777" /></Ic></IconBtn>
        <span className="ml-[5px] w-[14px]">ESP</span>
        <time className="ml-[6px] flex w-[48px] flex-col items-center leading-[11px]"><span>10:32 p. m.</span><span>23/5/2017</span></time>
        <IconBtn label="Notifications" className="mr-[9px] w-[24px]"><Ic><path d="M0.500 1h11v8H8L6 11V9H0.500z" stroke="#eee" /></Ic></IconBtn>
      </div>
    </footer>
  );
}

export default function App() {
  return (
    <div className="flex h-screen min-h-[480px] min-w-[1200px] flex-col overflow-hidden bg-[linear-gradient(#2b579a_39px,#f1f1f1_39px,#f1f1f1_100px,#dedede_100px)] font-['Roboto',sans-serif]">
      <div className="mx-[6px] mt-px mb-[3px] flex min-h-0 flex-1 flex-col border border-[#2b7fc9]">
        <Header />
        <div className="bg-[#424242]">
          <Ribbon />
          <div className="h-[3px] border-t border-[#3a3a3a] bg-[#6f6f6f]" />
        </div>
        <Canvas />
        <Footer />
      </div>
      <Taskbar />
    </div>
  );
}
